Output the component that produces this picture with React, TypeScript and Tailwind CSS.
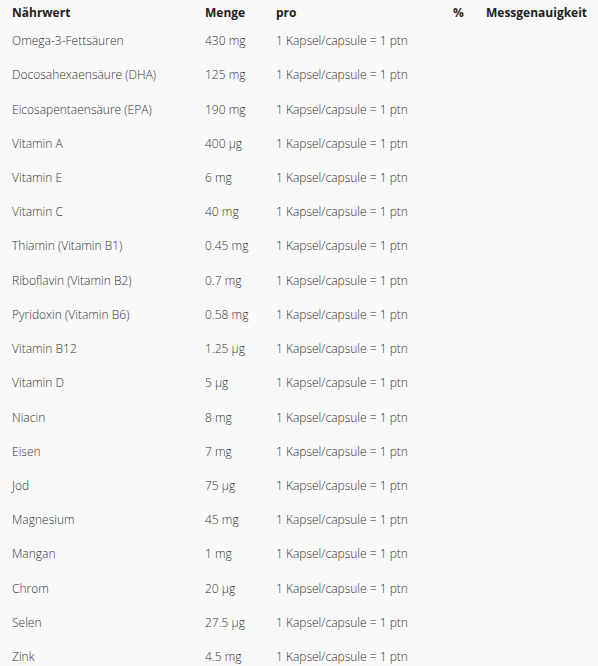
const rows: [string, string][] = [
  ["Omega-3-Fettsäuren", "430 mg"],
  ["Docosahexaensäure (DHA)", "125 mg"],
  ["Eicosapentaensäure (EPA)", "190 mg"],
  ["Vitamin A", "400 µg"],
  ["Vitamin E", "6 mg"],
  ["Vitamin C", "40 mg"],
  ["Thiamin (Vitamin B1)", "0.45 mg"],
  ["Riboflavin (Vitamin B2)", "0.7 mg"],
  ["Pyridoxin (Vitamin B6)", "0.58 mg"],
  ["Vitamin B12", "1.25 µg"],
  ["Vitamin D", "5 µg"],
  ["Niacin", "8 mg"],
  ["Eisen", "7 mg"],
  ["Jod", "75 µg"],
  ["Magnesium", "45 mg"],
  ["Mangan", "1 mg"],
  ["Chrom", "20 µg"],
  ["Selen", "27.5 µg"],
  ["Zink", "4.5 mg"],
];

const cols = "grid grid-cols-[193px_71px_177px_33px_124px]";

export default function App() {
  return (
    <div className="w-[598px] h-[666px] overflow-hidden bg-[#f9f9f9] text-[#333] font-['Open_Sans',sans-serif] text-[12px] pt-px">
      {/* header */}
      <div className={`${cols} h-[23px] items-center font-bold text-[#222]`}>
        <div className="pl-3">Nährwert</div>
        <div className="pl-3">Menge</div>
        <div className="pl-3">pro</div>
        <div className="pl-3">%</div>
        <div className="pl-3">Messgenauigkeit</div>
      </div>
      {rows.map(([name, amount]) => (
        <div key={name} className={`${cols} h-[34.22px] items-center font-light`}>
          <div className="pl-3">{name}</div>
          <div className="pl-3">{amount}</div>
          <div className="pl-3">1 Kapsel/capsule = 1 ptn</div>
          <div className="pl-3"></div>
          <div className="pl-3"></div>
        </div>
      ))}
    </div>
  );
}
